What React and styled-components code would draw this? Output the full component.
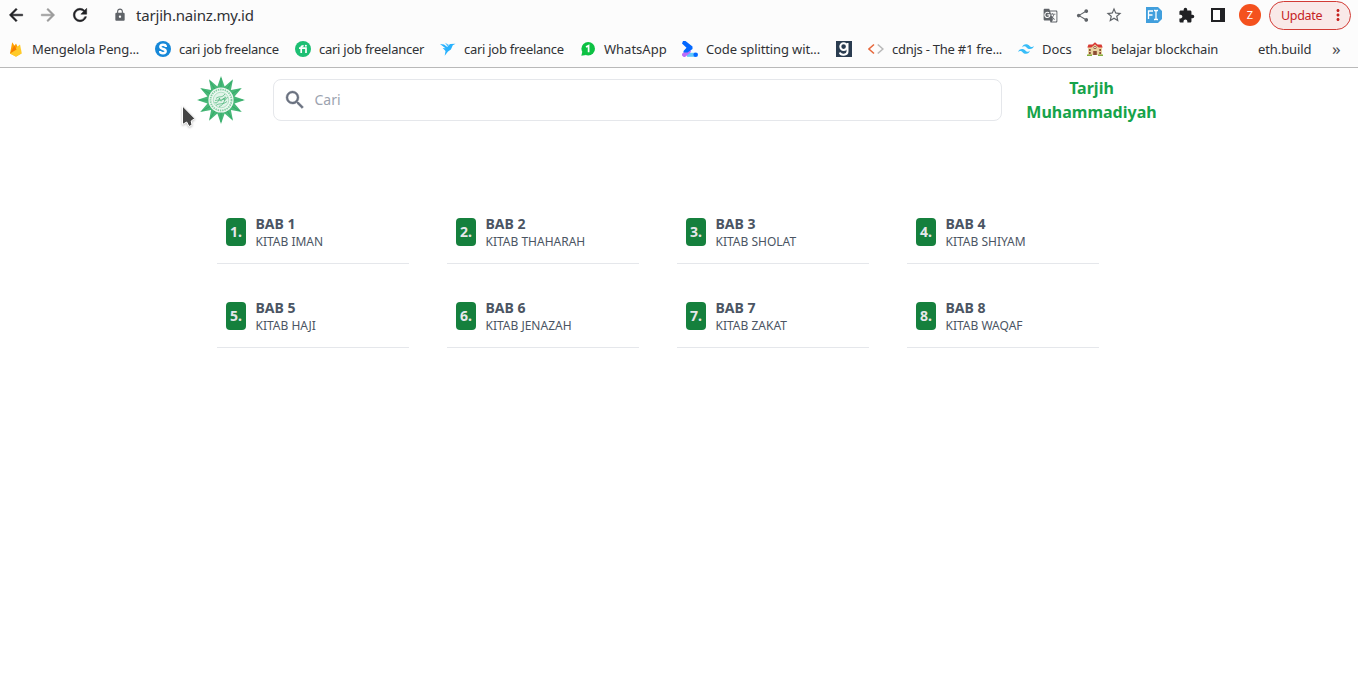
import React from "react";
import styled, { createGlobalStyle } from "styled-components";
import {
  MdArrowBack, MdArrowForward, MdRefresh, MdLock, MdGTranslate, MdShare,
  MdStarBorder, MdExtension, MdMoreVert, MdSearch,
} from "react-icons/md";

const GlobalStyle = createGlobalStyle`
  *, *::before, *::after { box-sizing: border-box; }
  body {
    margin: 0;
    background: #fff;
    font-family: "Noto Sans", "Open Sans", sans-serif;
    overflow: hidden;
  }
  svg { display: block; flex: none; }
`;

const Screen = styled.div`
  width: 1358px;
  height: 677px;
  position: relative;
`;

const Chrome = styled.div`
  height: 68px;
  background: #fcfcfc;
  border-bottom: 1px solid #b9b9b9;
`;

const AddressBar = styled.div`
  height: 31px;
  display: flex;
  align-items: center;
  padding: 0 7px 1px 6px;
`;

const NavButton = styled.span`
  width: 20px;
  margin-right: 12px;
  color: ${(p) => (p.$muted ? "#9b9b9b" : "#202124")};

  path:not([fill="none"]) {
    stroke: currentColor;
    stroke-width: 0.6px;
  }
`;

const Address = styled.div`
  flex: 1;
  display: flex;
  align-items: center;
  gap: 9px;
  margin-left: 11px;
  color: #5f6368;
  font-size: 15px;
  line-height: 20px;
`;

const Host = styled.span`
  color: #303236;
  letter-spacing: -0.19px;
  margin-bottom: 1px;
`;

const Tools = styled.div`
  display: flex;
  align-items: center;
`;

const Tool = styled.span`
  width: 16px;
  height: 16px;
  margin-right: ${(p) => p.$gap || 16}px;
  display: flex;
  align-items: center;
  justify-content: center;
  color: ${(p) => p.$color || "#5f6368"};
`;

const Avatar = styled.span`
  width: 22px;
  height: 22px;
  border-radius: 50%;
  background: #f4511e;
  color: #fff;
  font-size: 11px;
  line-height: 22px;
  text-align: center;
  margin-right: 8px;
`;

const UpdateButton = styled.span`
  width: 82px;
  height: 29px;
  display: flex;
  align-items: center;
  justify-content: space-between;
  padding: 0 3px 0 11px;
  border: 1px solid #d23b35;
  border-radius: 15px;
  background: #f9e9e8;
  color: #c5221f;
  font-size: 12.5px;
  letter-spacing: -0.3px;
`;

const Bookmarks = styled.div`
  height: 36px;
  display: flex;
  align-items: center;
  gap: 16px;
  padding-left: 8px;
`;

const Bookmark = styled.span`
  display: flex;
  align-items: center;
  gap: 8px;
  height: 20px;
`;

const BookmarkLabel = styled.span`
  width: ${(p) => p.$width}px;
  letter-spacing: ${(p) => p.$tracking}px;
  font-size: 13px;
  line-height: 20px;
  color: #303236;
  white-space: nowrap;
`;

const BlankIcon = styled.span`
  width: 16px;
  height: 16px;
`;

const Overflow = styled.span`
  margin-left: 4px;
  font-size: 17px;
  line-height: 20px;
  margin-bottom: 1px;
  color: #4b4e53;
`;

const Header = styled.header`
  height: 64px;
  display: flex;
  align-items: center;
  padding: 0 182px 0 197px;
`;

const SearchBox = styled.div`
  flex: none;
  width: 729px;
  height: 42px;
  margin-left: 28px;
  display: flex;
  align-items: center;
  gap: 7.5px;
  padding-left: 9px;
  border: 1px solid #e5e7eb;
  border-radius: 8px;
  color: #6b7280;

  path:not([fill="none"]) {
    stroke: currentColor;
    stroke-width: 0.4px;
  }
`;

const Placeholder = styled.span`
  font-size: 14px;
  line-height: 20px;
  color: #9ca3af;
`;

const Title = styled.h1`
  flex: none;
  width: 170px;
  margin: 0 0 0 4.5px;
  font-size: 16px;
  line-height: 24px;
  font-weight: 700;
  text-align: center;
  color: #16a34a;
`;

const Chapters = styled.main`
  display: grid;
  grid-template-columns: repeat(4, 192px);
  grid-auto-rows: 64px;
  column-gap: 38px;
  row-gap: 20px;
  padding: 68px 0 0 217px;
`;

const Chapter = styled.article`
  display: flex;
  align-items: flex-start;
  gap: 9.5px;
  padding: 14px 9px 0;
  border-bottom: 1px solid #e5e7eb;
`;

const Num = styled.span`
  width: 20px;
  height: 28px;
  margin-top: 4px;
  border-radius: 4px;
  background: #15803d;
  color: #e5e7eb;
  font-size: 14px;
  font-weight: 700;
  line-height: 28px;
  text-align: center;
`;

const ChapterText = styled.div`
  color: #4b5563;
  font-size: 12px;
  line-height: 16px;
`;

const ChapterName = styled.div`
  font-size: 14px;
  font-weight: 700;
  line-height: 20px;
`;

const Cursor = styled.svg`
  position: absolute;
  left: 180px;
  top: 104px;
  filter: drop-shadow(0 1px 1px rgba(0, 0, 0, 0.25));
`;

const Icon = ({ children }) => (
  <svg width="16" height="16" viewBox="0 0 16 16">{children}</svg>
);

const Firebase = () => (
  <Icon>
    <path d="M2 12.5 4.2 1.2 6.5 4.8 8 2.5 13 12.5 8 15.5Z" fill="#ffa000" />
    <path d="M2 12.5 9 6 12 3.6 13.8 12.5 8 15.7Z" fill="#ffca28" />
    <path d="M2 12.5 6.3 4.6 8.6 8.5Z" fill="#f57c00" />
  </Icon>
);
const SIcon = () => (
  <Icon>
    <circle cx="8" cy="8" r="8" fill="#1688d8" />
    <path d="M10.800 6V5.300Q10.500 3.800 8 3.800T5.300 5.800Q5.300 7.300 8 8t2.700 2.300Q10.700 12.200 8 12.200T5.200 10.700V10" fill="none" stroke="#fff" strokeWidth="2.400" />
  </Icon>
);
const Fiverr = () => (
  <Icon>
    <circle cx="8" cy="8" r="8" fill="#1dbf73" />
    <path d="M4 7.200h7V12M6.200 12V6.500Q6.200 4.700 8.600 4.900" fill="none" stroke="#fff" strokeWidth="1.700" />
    <circle cx="10.900" cy="4.800" r="1" fill="#fff" />
  </Icon>
);
const Bird = () => (
  <Icon>
    <path d="M0 3 4 3.500 7.300 6 8.800 4 10.300 3 15.500 2.800 12.800 4.300 10.900 8.500 8 10.400 4.700 14.800 5.500 10 2.700 7 5.500 7.300Z" fill="#29b2fe" />
    <path d="M5 1.800 8.800 3.800 7.600 5.500Z" fill="#5bc4fe" />
  </Icon>
);
const WhatsApp = () => (
  <Icon>
    <circle cx="8.200" cy="7.800" r="6.800" fill="#0dc143" />
    <path d="M1.300 14.800 2.400 10.500 6 14Z" fill="#0dc143" />
    <path d="M6 6 8.600 4.700V11.300" fill="none" stroke="#fff" strokeWidth="1.700" />
  </Icon>
);
const Prompt = () => (
  <Icon>
    <path d="M5 13.800h8" stroke="#63c7fb" strokeWidth="4" />
    <path d="M2.300 13.700 6.500 10.300" stroke="#bd6cf7" strokeWidth="4.500" strokeLinecap="round" />
    <path d="M1 0H3.500L10.500 5.500V8L5.500 11.500H1.500V10L4.500 6.800 0 2.500Z" fill="#0468ff" />
    <circle cx="13.700" cy="13.700" r="2.300" fill="#0468ff" />
  </Icon>
);
const Goodreads = () => (
  <Icon>
    <path d="M0 0h16v16H0z" fill="#2a3c50" />
    <circle cx="7.600" cy="5.600" r="3.300" fill="none" stroke="#fff" strokeWidth="2" />
    <path d="M11.500 2v8.500c0 4-6.900 4.300-7.700 1.100" fill="none" stroke="#fff" strokeWidth="2" />
  </Icon>
);
const Cdn = () => (
  <Icon>
    <path d="M6 3.500.9 8 6 12.500" fill="none" stroke="#e7683c" strokeWidth="1.600" />
    <path d="M9.800 3.500 14.900 8 9.800 12.500" fill="none" stroke="#b9b9b9" strokeWidth="1.600" />
  </Icon>
);
const Tailwind = () => (
  <Icon>
    <g fill="#38bdf8">
      <path d="M4 6.400Q5 3.200 8 3.200c3.200 0 3.500 2.400 5.200 2.800q1.700.3 2.800-1.200Q15 8 12 8C8.800 8 8.500 5.600 6.800 5.200Q5.100 4.900 4 6.400Z" />
      <path d="M0 11.200Q1 8 4 8c3.200 0 3.500 2.400 5.200 2.800q1.700.3 2.800-1.200-1 3.200-4 3.200c-3.200 0-3.500-2.400-5.200-2.800Q1.100 9.700 0 11.200Z" />
    </g>
  </Icon>
);
const School = () => (
  <Icon>
    <path d="M1 6h14v8H1zM4 4h8v10H4z" fill="#e9d3a0" />
    <path d="M.3 6.500 1.500 3.500h4L8 1.300l2.500 2.200h4l1.200 3h-4L8 3.500 4.300 6.500Z" fill="#d83a35" />
    <path d="M2 8h1.700v2H2zM12.300 8H14v2h-1.700zM2 11h1.700v2H2zM12.300 11H14v2h-1.700zM6.200 10h3.600v4H6.200z" fill="#8b4d35" />
    <circle cx="8" cy="6.500" r="1.500" fill="#8b4d35" />
    <circle cx="8" cy="6.500" r=".8" fill="#fff" />
    <path d="M0 13.500h5V15H0zM11 13.500h5V15h-5z" fill="#83ad3f" />
  </Icon>
);

const bookmarks = [
  [Firebase, "Mengelola Peng...", 107, -0.13],
  [SIcon, "cari job freelance", 100, -0.27],
  [Fiverr, "cari job freelancer", 105, -0.26],
  [Bird, "cari job freelance", 100, -0.27],
  [WhatsApp, "WhatsApp", 62, 0],
  [Prompt, "Code splitting wit...", 114, -0.12],
  [Goodreads],
  [Cdn, "cdnjs - The #1 fre...", 110, -0.25],
  [Tailwind, "Docs", 29, 0],
  [School, "belajar blockchain", 107, -0.2],
  [BlankIcon, "eth.build", 54, -0.1],
];

const chapters = ["IMAN", "THAHARAH", "SHOLAT", "SHIYAM", "HAJI", "JENAZAH", "ZAKAT", "WAQAF"];

const starPoints = Array.from({ length: 24 }, (_, i) => {
  const radius = i % 2 ? 14 : 24;
  const angle = (i * Math.PI) / 12;
  return `${24 + radius * Math.sin(angle)},${24 - radius * Math.cos(angle)}`;
}).join(" ");

const Logo = () => (
  <svg width="48" height="48" viewBox="0 0 48 48">
    <polygon points={starPoints} fill="#48b878" />
    {Array.from({ length: 12 }, (_, i) => (
      <path key={i} d="M24 2V12" stroke="#2da562" strokeWidth=".7" transform={`rotate(${i * 30} 24 24)`} />
    ))}
    <circle cx="24" cy="24" r="12.600" fill="#edf8f1" />
    <circle cx="24" cy="24" r="10.500" fill="none" stroke="#85cda3" strokeWidth="1.800" strokeDasharray="1.400 .9" />
    <circle cx="24" cy="24" r="7.800" fill="#e2f4e9" stroke="#8bd0a8" strokeWidth=".6" />
    <g fill="none" stroke="#4fb67c" strokeWidth=".8">
      <path d="M17.500 26c2 3 4-1 5-4 .5 4 2 4 4 0 .5 3 2 3 4-1" />
      <path d="M19 22.500c3-3 6 0 9-4.500M19 29.500c3-3 6 0 11-4M22 30.500c4-1 6-5 6-10M18 24.500c3-1 6 1 11-3" />
    </g>
  </svg>
);

export default function App() {
  return (
    <Screen>
      <GlobalStyle />
      <Chrome>
        <AddressBar>
          <NavButton><MdArrowBack size={20} /></NavButton>
          <NavButton $muted><MdArrowForward size={20} /></NavButton>
          <NavButton><MdRefresh size={20} /></NavButton>
          <Address>
            <MdLock size={14} />
            <Host>tarjih.nainz.my.id</Host>
          </Address>
          <Tools>
            <Tool><MdGTranslate size={15} /></Tool>
            <Tool><MdShare size={15} /></Tool>
            <Tool $gap={24}><MdStarBorder size={18} /></Tool>
            <Tool>
              <Icon>
                <path d="M0 0h12l4 4v8l-4 4H0z" fill="#419fdd" />
                <path d="M2.500 12V4H7M2.500 8h4M8 3.500h1.200l.8.800.8-.8H12M8 12.500h1.200l.8-.8.8.8H12M10 4v8" fill="none" stroke="#fff" strokeWidth="1.300" />
              </Icon>
            </Tool>
            <Tool $color="#202124"><MdExtension size={17} /></Tool>
            <Tool $gap={13}>
              <Icon>
                <path d="M1 1h14v14H1z" fill="#202124" />
                <path d="M3 3h7v10H3z" fill="#fff" />
              </Icon>
            </Tool>
            <Avatar>Z</Avatar>
            <UpdateButton>Update<MdMoreVert size={18} /></UpdateButton>
          </Tools>
        </AddressBar>
        <Bookmarks>
          {bookmarks.map(([Glyph, label, width, tracking], i) => (
            <Bookmark key={i}>
              <Glyph />
              {label && <BookmarkLabel $width={width} $tracking={tracking}>{label}</BookmarkLabel>}
            </Bookmark>
          ))}
          <Overflow>»</Overflow>
        </Bookmarks>
      </Chrome>
      <Header>
        <Logo />
        <SearchBox>
          <MdSearch size={24} />
          <Placeholder>Cari</Placeholder>
        </SearchBox>
        <Title>Tarjih<br />Muhammadiyah</Title>
      </Header>
      <Chapters>
        {chapters.map((name, i) => (
          <Chapter key={name}>
            <Num>{i + 1}.</Num>
            <ChapterText>
              <ChapterName>BAB {i + 1}</ChapterName>
              KITAB {name}
            </ChapterText>
          </Chapter>
        ))}
      </Chapters>
      <Cursor width="16" height="26" viewBox="0 0 16 26">
        <path d="M2.500 2V20.500L6.700 18 9 22.500 12 21 11.200 17 14.800 14.500Z" fill="#444" stroke="#fff" strokeWidth="1" />
      </Cursor>
    </Screen>
  );
}
